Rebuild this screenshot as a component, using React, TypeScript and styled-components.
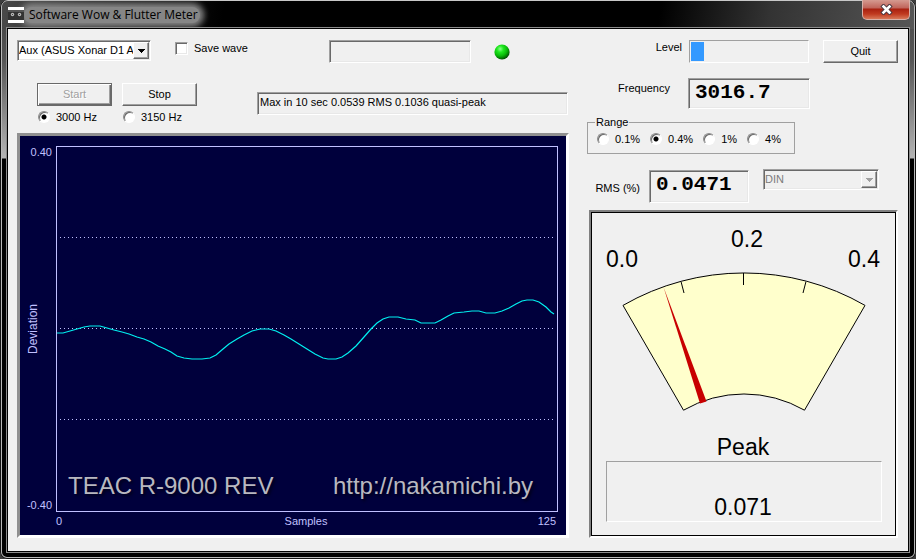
import React, { useState } from "react";
import styled, { createGlobalStyle, css } from "styled-components";

const GlobalStyle = createGlobalStyle`
  *, *::before, *::after { box-sizing: border-box; }
  html, body, #root { height: 100%; }
  body {
    margin: 0;
    background: #3c3c3c;
    color: #000;
    font: 11px/13px "Liberation Sans", Arial, sans-serif;
  }
  button, input, select, output { font: inherit; color: inherit; }
`;

const sunken = css`
  border: 1px solid;
  border-color: #a0a0a0 #fff #fff #a0a0a0;
  box-shadow: inset 1px 1px 0 #696969, inset -1px -1px 0 #e8e8e8;
`;

const Window = styled.div`
  position: relative;
  display: flex;
  flex-direction: column;
  min-width: 900px;
  min-height: 100vh;
  padding: 0 8px 8px;
  border-radius: 7px;
  background:
    linear-gradient(180deg, #3f3f3f 0, #555 60px, #b4b4b4 158px, #000 159px) left / 8px 100% no-repeat,
    linear-gradient(180deg, #4a4a4a 0, #555 60px, #b4b4b4 158px, #000 159px) right / 8px 100% no-repeat,
    #000;
  box-shadow: inset 0 0 0 1px #111, inset 0 0 0 2px #b8b8b8;
`;

const TitleBar = styled.header`
  display: flex;
  align-items: center;
  height: 29px;
  flex: none;
  margin: 0 -6px;
  padding-left: 6px;
  border-top: 1px solid #c8c8c8;
  border-radius: 6px 6px 0 0;
  background: linear-gradient(100deg, #4a4a4a 0, #222 90px, #000 220px, #000 72%, #333 84%, #565656 100%);
`;

const Title = styled.h1`
  margin: 0;
  padding: 0 2px 0 5px;
  border-radius: 8px;
  font: 12px/16px "Open Sans", "Noto Sans", sans-serif;
  color: #000;
  background: #868686;
  box-shadow: 0 0 6px 4px #868686;
`;

const CloseButton = styled.button`
  display: grid;
  place-items: center;
  align-self: flex-start;
  width: 48px;
  height: 20px;
  margin: -1px 4px 0 auto;
  padding: 0;
  border: 1px solid #d8b0a8;
  border-top: 0;
  border-radius: 0 0 5px 5px;
  background: linear-gradient(180deg, #d59a90 0, #c0645a 8px, #a82010 9px, #c03a20 14px, #d87858 19px);
`;

const Client = styled.main`
  flex: 1;
  display: grid;
  grid-template-columns: minmax(0, 552fr) minmax(0, 311fr);
  column-gap: 18px;
  padding: 11px 10px 13px 9px;
  background: #f0f0f0;
  box-shadow: 0 0 0 1px #000, 0 0 0 2px #8c8c8c;
`;

const Column = styled.div`
  display: flex;
  flex-direction: column;
`;

const Row = styled.div<{ $height: number; $indent?: number }>`
  display: flex;
  align-items: flex-start;
  flex: none;
  height: ${(p) => p.$height}px;
  padding-left: ${(p) => p.$indent ?? 0}px;
`;

const ComboFrame = styled.div<{ $disabled?: boolean; $width: number }>`
  ${sunken}
  position: relative;
  display: flex;
  width: ${(p) => p.$width}px;
  height: 21px;
  background: ${(p) => (p.$disabled ? "#f0f0f0" : "#fff")};
`;

const Combo = styled.select`
  appearance: none;
  flex: 1;
  min-width: 0;
  margin: 1px 17px 1px 1px;
  padding: 0;
  border: 0;
  background: transparent;
  white-space: nowrap;
  overflow: hidden;
  text-overflow: clip;
  &:disabled { color: #7c7c7c; opacity: 1; }
`;

const ComboArrow = styled.span`
  position: absolute;
  top: 1px;
  right: 1px;
  bottom: 1px;
  display: grid;
  place-items: center;
  width: 16px;
  border: 1px solid;
  border-color: #fff #696969 #696969 #fff;
  background: #f0f0f0;
  box-shadow: inset -1px -1px 0 #a0a0a0;
  pointer-events: none;
`;

const Choice = styled.label`
  display: flex;
  align-items: center;
  gap: 6px;
  height: 14px;
  white-space: nowrap;
`;

const CheckBox = styled.input`
  ${sunken}
  appearance: none;
  width: 13px;
  height: 13px;
  margin: 0;
  background: #fff;
  &:checked { background: radial-gradient(#000 2px, #fff 3px); }
`;

const Radio = styled.input`
  appearance: none;
  width: 12px;
  height: 12px;
  margin: 0;
  border: 1px solid;
  border-color: #8c8c8c #fff #fff #8c8c8c;
  border-radius: 50%;
  background: #fff;
  box-shadow: inset 1px 1px 0 #696969;
  &:checked { background: radial-gradient(circle, #000 2px, #fff 3px); }
`;

const Push = styled.button`
  width: 75px;
  height: 23px;
  padding: 0;
  border: 1px solid;
  border-color: #fff #696969 #696969 #fff;
  background: #f0f0f0;
  box-shadow: inset -1px -1px 0 #a0a0a0;
  &:disabled {
    color: #a0a0a0;
    text-shadow: 1px 1px 0 #fff;
    border-color: #696969;
    box-shadow: inset 1px 1px 0 #fff, inset -1px -1px 0 #696969, inset -2px -2px 0 #a0a0a0;
  }
`;

const TextBox = styled.input<{ $grow?: boolean }>`
  ${sunken}
  width: 142px;
  height: 23px;
  padding: 0 2px 3px;
  background: #f0f0f0;
  ${(p) => p.$grow && css`flex: 1; width: auto; min-width: 0;`}
`;

const ButtonGroup = styled.div`
  display: grid;
  grid-template-columns: 75px 75px;
  gap: 4px 10px;
  margin-right: 60px;
`;

const RadioCell = styled.div`
  padding-left: 1px;
`;

const Spaced = styled.div<{ $left?: number; $top?: number }>`
  margin-left: ${(p) => p.$left ?? 0}px;
  margin-top: ${(p) => p.$top ?? 0}px;
`;

const InfoSlot = styled(Spaced)`
  display: flex;
  flex: 1;
  padding-right: 1px;
`;

const Chart = styled.section`
  flex: 1;
  display: grid;
  grid-template: minmax(0, 1fr) 23px / 36px minmax(0, 1fr);
  padding: 10px 8px 0 0;
  border: 3px solid;
  border-color: #909090 #fff #fff #909090;
  background: #00003c;
  color: #c0c0ff;
`;

const YAxis = styled.div`
  position: relative;
  display: flex;
  flex-direction: column;
  justify-content: space-between;
  align-items: flex-end;
  padding-right: 4px;
`;

const AxisTitle = styled.span`
  writing-mode: vertical-rl;
  transform: rotate(180deg);
  align-self: flex-start;
  margin-left: 7px;
  font-size: 12px;
`;

const XAxis = styled.div`
  grid-column: 2;
  display: grid;
  grid-template-columns: 1fr auto 1fr;
  padding: 3px 2px 0 0;
`;

const AxisEnd = styled.span`
  text-align: right;
`;

const Plot = styled.div`
  position: relative;
  border: 1px solid #c0c0ff;
`;

const Trace = styled.svg`
  position: absolute;
  width: 100%;
  height: 100%;
`;

const Watermark = styled.div`
  position: absolute;
  left: 11px;
  right: 24px;
  bottom: 11px;
  display: flex;
  justify-content: space-between;
  font-size: 24px;
  line-height: 28px;
  color: #b8b8c0;
  text-shadow: 2px 2px 3px #000018;
  white-space: nowrap;
`;

const WatermarkLink = styled.a`
  color: inherit;
  text-decoration: none;
`;

const Caption = styled.label<{ $width: number; $top: number }>`
  width: ${(p) => p.$width}px;
  padding-top: ${(p) => p.$top}px;
  flex: none;
  text-align: right;
  white-space: nowrap;
`;

const Level = styled.div`
  width: 120px;
  height: 23px;
  margin: 0 14px 0 7px;
  padding: 1px;
  border: 1px solid;
  border-color: #a0a0a0 #fff #fff #a0a0a0;
`;

const LevelFill = styled.div`
  height: 100%;
  background: #3399ff;
`;

const Readout = styled.output<{ $width: number; $height: number }>`
  ${sunken}
  display: block;
  width: ${(p) => p.$width}px;
  height: ${(p) => p.$height}px;
  padding: 2px 0 0 6px;
  font: bold 21px/24px "Liberation Mono", "Courier New", monospace;
`;

const Range = styled.fieldset`
  display: flex;
  gap: 10px;
  width: 208px;
  height: 38px;
  margin: 0;
  padding: 3px 0 0 9px;
  border: 1px solid #a0a0a0;
`;

const RangeLegend = styled.legend`
  padding: 0 1px;
  margin-left: -2px;
`;

const MeterPanel = styled.section`
  flex: 1;
  display: flex;
  margin: 0 0 0 2px;
  border: 2px solid;
  border-color: #808080 #fff #fff #808080;
`;

const MeterFace = styled.div`
  flex: 1;
  display: flex;
  flex-direction: column;
  min-width: 0;
  padding: 0 13px 13px 14px;
  border: 1px solid #000;
  font-size: 23px;
  line-height: 26px;
  text-align: center;
`;

const Dial = styled.svg`
  display: block;
  flex: none;
  width: calc(100% + 27px);
  margin: 0 -13px 0 -14px;
`;

const PeakLabel = styled.label`
  padding: 2px 2px 0 0;
`;

const PeakBox = styled.output`
  flex: 1;
  display: flex;
  align-items: flex-end;
  justify-content: center;
  margin-top: 1px;
  padding: 0 2px 1px 0;
  border: 1px solid;
  border-color: #a0a0a0 #fff #fff #a0a0a0;
`;

const IconSlot = styled.span`
  position: relative;
  z-index: 1;
  display: flex;
`;

const CassetteIcon = () => (
  <IconSlot>
    <svg width="16" height="16" viewBox="0 0 16 16" aria-hidden="true">
      <rect width="16" height="16" fill="#fff" />
      <rect y="3" width="16" height="10" fill="#333" />
      <rect y="3" width="16" height="2" fill="#555" />
      <circle cx="4.5" cy="7.5" r="1.7" fill="#bbb" />
      <circle cx="11.5" cy="7.5" r="1.7" fill="#bbb" />
      <circle cx="4.5" cy="7.5" r="0.6" fill="#333" />
      <circle cx="11.5" cy="7.5" r="0.6" fill="#333" />
    </svg>
  </IconSlot>
);

const Arrow = ({ color }: { color: string }) => (
  <svg width="7" height="4" viewBox="0 0 7 4" shapeRendering="crispEdges" aria-hidden="true">
    <path d="M0 0h7L3.5 4z" fill={color} />
  </svg>
);

const Led = () => (
  <svg width="16" height="16" viewBox="0 0 16 16" role="img" aria-label="Signal OK">
    <defs>
      <radialGradient id="led" cx="0.38" cy="0.3" r="0.72">
        <stop offset="0" stopColor="#8cff8c" />
        <stop offset="0.3" stopColor="#20e820" />
        <stop offset="0.65" stopColor="#08b808" />
        <stop offset="1" stopColor="#004800" />
      </radialGradient>
    </defs>
    <circle cx="8" cy="8" r="7.6" fill="url(#led)" />
  </svg>
);

const DialDrawing = () => (
  <Dial viewBox="592 212 303 219" role="img" aria-label="Peak dial">
    <path d="M623 304.400A242 242 0 0 1 865 304.400L804.500 409.200A121 121 0 0 0 683.500 409.200Z" fill="#ffffcc" stroke="#000" />
    <path d="M743.500 272V284M681 280.500L684 292M806 280.500L803 292" stroke="#000" fill="none" />
    <path d="M663.500 286L700 402.500L706.500 400.500Z" fill="#c80000" />
    <g fontSize="23" textAnchor="middle">
      <text x="622" y="266">0.0</text>
      <text x="747" y="246">0.2</text>
      <text x="864" y="266">0.4</text>
    </g>
  </Dial>
);

const TRACE =
  "M0 186L6 186 13 184 20 182 27 180 33 179 43 179 50 181 57 183 65 185 72 187 80 190 87 192 94 195 101 199 108 202 114 205 120 209 127 211 135 212 145 212 153 211 159 208 166 202 172 197 180 192 187 188 195 184 203 182 212 182 219 184 227 188 234 192 242 197 250 202 258 207 266 211 271 212 279 212 285 210 291 206 299 199 307 190 314 182 320 176 326 172 332 170 341 170 349 172 358 173 364 176 378 176 384 173 391 169 397 166 407 165 415 164 422 164 429 166 438 166 445 164 452 161 459 157 465 154 470 153 476 153 482 155 489 160 494 165 497 167";

const RATES = ["3000 Hz", "3150 Hz"];
const RANGES = ["0.1%", "0.4%", "1%", "4%"];

export default function App() {
  const [rate, setRate] = useState("3000 Hz");
  const [range, setRange] = useState("0.4%");
  const level = 11;

  return (
    <>
      <GlobalStyle />
      <Window>
        <TitleBar>
          <CassetteIcon />
          <Title>Software Wow &amp; Flutter Meter</Title>
          <CloseButton aria-label="Close">
            <svg width="13" height="11" viewBox="0 0 13 11" aria-hidden="true">
              <path d="M3.500 2.500L9.500 8.500M9.500 2.500L3.500 8.500" stroke="#4a3840" strokeWidth="4.500" strokeLinecap="square" />
              <path d="M3.500 2.500L9.500 8.500M9.500 2.500L3.500 8.500" stroke="#fff" strokeWidth="2.600" strokeLinecap="square" />
            </svg>
          </CloseButton>
        </TitleBar>
        <Client>
          <Column>
            <Row $height={43}>
              <ComboFrame $width={134}>
                <Combo aria-label="Input device">
                  <option>Aux (ASUS Xonar D1 A</option>
                </Combo>
                <ComboArrow><Arrow color="#000" /></ComboArrow>
              </ComboFrame>
              <Spaced $left={24} $top={1}>
                <Choice><CheckBox type="checkbox" />Save wave</Choice>
              </Spaced>
              <Spaced $left={81}>
                <TextBox aria-label="File name" />
              </Spaced>
              <Spaced $left={23} $top={4}><Led /></Spaced>
            </Row>
            <Row $height={50} $indent={20}>
              <ButtonGroup>
                <Push disabled>Start</Push>
                <Push>Stop</Push>
                {RATES.map((r) => (
                  <RadioCell key={r}>
                    <Choice>
                      <Radio type="radio" name="rate" checked={rate === r} onChange={() => setRate(r)} />
                      {r}
                    </Choice>
                  </RadioCell>
                ))}
              </ButtonGroup>
              <InfoSlot $top={9}>
                <TextBox $grow readOnly aria-label="Maximum" value="Max in 10 sec 0.0539 RMS 0.1036 quasi-peak" />
              </InfoSlot>
            </Row>
            <Chart aria-label="Deviation chart">
              <YAxis>
                <span>0.40</span>
                <AxisTitle>Deviation</AxisTitle>
                <span>-0.40</span>
              </YAxis>
              <Plot>
                <Trace viewBox="0 0 500 364" preserveAspectRatio="none">
                  <g stroke="#c0c0ff" strokeDasharray="1 3" shapeRendering="crispEdges">
                    <path d="M3 90.500H497M3 181.500H497M3 272.500H497" />
                  </g>
                  <path d={TRACE} fill="none" stroke="#00f0f0" strokeWidth="1.200" />
                </Trace>
                <Watermark>
                  <span>TEAC R-9000 REV</span>
                  <WatermarkLink href="http://nakamichi.by">http://nakamichi.by</WatermarkLink>
                </Watermark>
              </Plot>
              <XAxis>
                <span>0</span>
                <span>Samples</span>
                <AxisEnd>125</AxisEnd>
              </XAxis>
            </Chart>
          </Column>
          <Column>
            <Row $height={38}>
              <Caption as="span" $width={95} $top={1}>Level</Caption>
              <Level role="meter" aria-label="Level" aria-valuenow={level} aria-valuemin={0} aria-valuemax={100}>
                <LevelFill style={{ width: `${level}%` }} />
              </Level>
              <Push>Quit</Push>
            </Row>
            <Row $height={38}>
              <Caption htmlFor="freq" $width={83} $top={4}>Frequency</Caption>
              <Spaced $left={18}><Readout id="freq" $width={122} $height={31}>3016.7</Readout></Spaced>
            </Row>
            <Row $height={53}>
              <Range>
                <RangeLegend>Range</RangeLegend>
                {RANGES.map((r) => (
                  <Choice key={r}>
                    <Radio type="radio" name="range" checked={range === r} onChange={() => setRange(r)} />
                    {r}
                  </Choice>
                ))}
              </Range>
            </Row>
            <Row $height={41}>
              <Caption htmlFor="rms" $width={53} $top={13}>RMS (%)</Caption>
              <Spaced $left={9} $top={1}><Readout id="rms" $width={100} $height={33}>0.0471</Readout></Spaced>
              <Spaced $left={14}>
                <ComboFrame $disabled $width={116}>
                  <Combo disabled aria-label="Weighting"><option>DIN</option></Combo>
                  <ComboArrow><Arrow color="#a0a0a0" /></ComboArrow>
                </ComboFrame>
              </Spaced>
            </Row>
            <MeterPanel>
              <MeterFace>
                <DialDrawing />
                <PeakLabel htmlFor="peak">Peak</PeakLabel>
                <PeakBox id="peak">0.071</PeakBox>
              </MeterFace>
            </MeterPanel>
          </Column>
        </Client>
      </Window>
    </>
  );
}
